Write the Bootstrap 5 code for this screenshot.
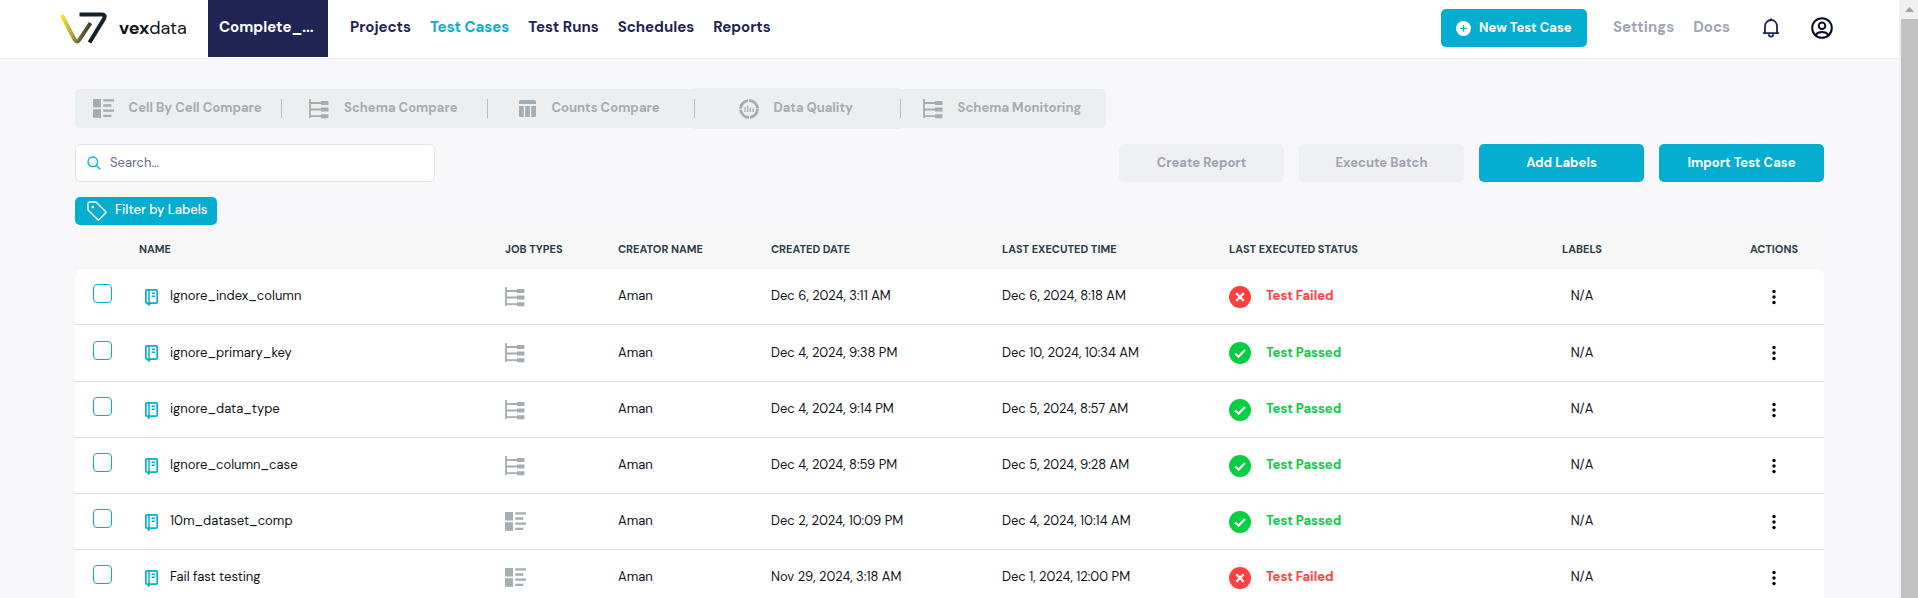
<!DOCTYPE html>
<html lang="en">
<head>
<meta charset="utf-8">
<meta name="viewport" content="width=device-width, initial-scale=1">
<title>vexdata - Test Cases</title>
<link href="https://cdn.jsdelivr.net/npm/bootstrap@5.3.0/dist/css/bootstrap.min.css" rel="stylesheet">
<style>
  :root { --brand: #05add0; --navy: #1f2453; --muted: #a4adb1; }
  body { font-family: "DM Sans", Inter, "Liberation Sans", sans-serif; font-size: 13px; line-height: 20px; color: #101418; background: #f8f8fb; }
  svg { display: block; flex: none; }
  .topbar { height: 59px; border-bottom: 1px solid #ececef; padding: 0 66px 0 60px; }
  .wordmark { width: 148px; font-size: 18px; line-height: 24px; color: #0b1420; text-decoration: none; }
  .project-btn { width: 120px; height: 57px; background: var(--navy); color: #fff; font-size: 15px; font-weight: 700; border: 0; padding: 0 0 4px 11px; text-align: left; }
  .main-links { gap: 19px; margin-left: 22px; padding-bottom: 4px; }
  .main-links a, .side-links a { font-size: 15px; font-weight: 700; color: var(--navy); text-decoration: none; }
  .main-links a.active { color: var(--brand); }
  .side-links a { color: #a0a5b4; padding-bottom: 2px; }
  .side-links { height: 56px; }
  .newcase { width: 146px; }
  .settings { margin-left: 26px; }
  .docs { margin-left: 19px; }
  .bell { margin-left: 32px; }
  .user { margin-left: 31px; }
  .icon-btn { border: 0; background: none; padding: 0; }
  .action-btn { height: 38px; border: 0; border-radius: 5px; background: var(--brand); color: #fff; font-size: 13px; font-weight: 700; padding: 0; white-space: nowrap; }
  .action-btn:disabled { background: #eff0f4; color: #a0a3ae; }
  .wide-btn { width: 165px; }
  .content { padding: 29px 75px 0; }
  .kinds { max-width: 1031px; }
  .kind-btn { flex: 1 1 0; height: 39px; gap: 15px; border: 0; background: #ebefef; color: var(--muted); font-size: 13px; font-weight: 700; padding: 0 2px 0 0; white-space: nowrap; }
  .kind-btn:first-child { border-radius: 5px 0 0 5px; }
  .kind-btn:last-child { border-radius: 0 5px 5px 0; }
  .kind-btn + .kind-btn { background: linear-gradient(#b9bec1, #b9bec1) left center / 1px 19px no-repeat #ebefef; }
  .kind-btn.tall { height: 41px; }
  .tools { margin-top: 15px; }
  .tool-btns { gap: 15px; }
  .search-box { width: 360px; height: 38px; border: 1px solid #e0e5ef; border-radius: 5px; background: #fff; padding-left: 11px; gap: 9px; }
  .search-box input { border: 0; outline: 0; background: none; color: #333; font-size: 13px; padding: 0; }
  .search-box input::placeholder { color: #6c7080; opacity: 1; }
  .filter-btn { height: 28px; width: 142px; border: 0; border-radius: 5px; background: var(--brand); color: #fff; font-size: 13px; font-weight: 500; padding: 0 0 0 12px; gap: 8px; margin-top: 15px; white-space: nowrap; }
  .filter-btn span { padding-bottom: 2px; }
  .cases { table-layout: fixed; width: 100%; margin-top: 4px; border-collapse: separate; border-spacing: 0; }
  .cases th { height: 40px; padding: 0; font-size: 11px; font-weight: 700; color: #2b4049; background: #f8f8f8; white-space: nowrap; }
  .cases td { height: 56px; padding: 0; border-bottom: 1px solid #dfe0e5; background: #fff; white-space: nowrap; }
  .cases tbody tr:first-child td:first-child { border-top-left-radius: 8px; }
  .cases tbody tr:first-child td:last-child { border-top-right-radius: 8px; }
  .cases tbody tr:nth-child(2) td { height: 57px; }
  .cases input { appearance: none; display: block; width: 19px; height: 19px; margin: 0 0 6px 18px; border: 1px solid var(--brand); border-radius: 4px; background: #fff; }
  .cases input:checked { background: var(--brand); }
  .case-name { padding-left: 6px; gap: 11px; }
  .verdict { gap: 15px; font-weight: 700; }
  .cell-text { display: block; padding-bottom: 1px; }
  .failed { color: #ff4040; }
  .passed { color: #05cf40; }
  .c-check { width: 64px; } .c-job { width: 113px; } .c-creator { width: 153px; } .c-created { width: 231px; }
  .c-executed { width: 227px; } .c-status { width: 211px; } .c-labels { width: 284px; } .c-actions { width: 100px; }
  .scroll-rail { width: 19px; background: #f0f0f0; padding-left: 2px; }
  .scroll-thumb { background: #c1c1c1; }
</style>
</head>
<body class="vh-100 overflow-hidden d-flex">

<svg width="0" height="0" class="position-absolute" aria-hidden="true">
  <defs>
    <symbol id="schema" viewBox="0 0 20 20">
      <path d="M1 0v19M1 4h12M1 10.500h12M1 17.200h12" fill="none" stroke="#a4adb1" stroke-width="1.800"/>
      <path d="M12 2h7.500v4H12zM12 8.500h7.500v4H12zM12 15.200h7.500v4H12z" fill="#a4adb1"/>
    </symbol>
    <symbol id="cells" viewBox="0 0 21 19">
      <path d="M0 0h8v8.500H0zM0 10.300h8v8.500H0zM10.300.300H21v2.300H10.300zM10.300 5.300h8v2.400h-8zM10.300 10.400H21v2.400H10.300zM10.300 15.700h8V18h-8z" fill="#a4adb1"/>
    </symbol>
    <symbol id="book" viewBox="0 0 14 18">
      <rect x=".900" y="1.800" width="11.300" height="13.400" rx="1.300" fill="none" stroke="#05add0" stroke-width="1.700"/>
      <path d="M4 1.500v14M6.700 5.200h3.200M6.700 8.300h3.200" fill="none" stroke="#05add0" stroke-width="1.500"/>
      <path d="M2.500 15.500h2.500V17.500H2.500z" fill="#05add0"/>
    </symbol>
    <symbol id="dots" viewBox="0 0 4 16">
      <circle cx="2" cy="2.500" r="1.700"/><circle cx="2" cy="8" r="1.700"/><circle cx="2" cy="13.500" r="1.700"/>
    </symbol>
    <symbol id="pass" viewBox="0 0 22 22">
      <circle cx="11" cy="11" r="11" fill="#05cf40"/>
      <path d="M6.200 11.500l3.300 3.300 6.500-6.800" fill="none" stroke="#fff" stroke-width="2.200"/>
    </symbol>
    <symbol id="fail" viewBox="0 0 22 22">
      <circle cx="11" cy="11" r="11" fill="#ff4040"/>
      <path d="M7.300 7.300l7.400 7.400M14.700 7.300l-7.400 7.400" fill="none" stroke="#fff" stroke-width="2.300"/>
    </symbol>
  </defs>
</svg>

<div class="flex-grow-1 overflow-hidden">
  <header class="topbar bg-white d-flex align-items-start">
    <a href="#" class="wordmark d-flex align-items-center gap-2 mt-2 pt-1" aria-label="vexdata">
      <svg width="47" height="32" viewBox="0 0 47 32">
        <defs>
          <linearGradient id="gold" gradientUnits="userSpaceOnUse" x1="1" y1="4" x2="32" y2="14"><stop offset="0" stop-color="#ffe92e"/><stop offset=".55" stop-color="#a99a35"/><stop offset="1" stop-color="#2c3030"/></linearGradient>
        </defs>
        <path d="M1.800 3L14.500 27.500Q17 31.500 19.500 27.500L30.500 11" fill="none" stroke="url(#gold)" stroke-width="4"/>
        <path d="M19.500 2.500H42q4 0 2 4.200L29.500 30.500" fill="none" stroke="#14202a" stroke-width="4"/>
      </svg>
      <span class="ms-1"><b>vex</b>data</span>
    </a>
    <button class="project-btn" type="button">Complete_...</button>
    <nav class="main-links d-flex align-items-center h-100" aria-label="Main">
      <a href="#">Projects</a><a href="#" class="active">Test Cases</a><a href="#">Test Runs</a><a href="#">Schedules</a><a href="#">Reports</a>
    </nav>
    <div class="ms-auto d-flex align-items-center side-links">
      <button type="button" class="action-btn d-flex align-items-center justify-content-center gap-2 newcase">
        <svg width="15" height="15" viewBox="0 0 16 16"><circle cx="8" cy="8" r="8" fill="#fff"/><path d="M8 4.500v7M4.500 8h7" stroke="#05add0" stroke-width="1.300"/></svg>
        New Test Case
      </button>
      <a href="#" class="settings">Settings</a>
      <a href="#" class="docs">Docs</a>
      <button type="button" class="icon-btn bell" aria-label="Notifications">
        <svg width="18" height="20" viewBox="0 0 18 20" fill="none" stroke="#1f2453" stroke-width="1.800"><path d="M1 15.200h16M3 15V8.500C3 4.700 5.600 2 9 2s6 2.700 6 6.500V15M9 .5V2"/><path d="M6.700 16.200c.2 3.300 4.400 3.300 4.600 0"/></svg>
      </button>
      <button type="button" class="icon-btn user" aria-label="Account">
        <svg width="22" height="22" viewBox="0 0 22 22" fill="none" stroke="#060b20" stroke-width="2"><circle cx="11" cy="11" r="9.800"/><circle cx="11" cy="8.700" r="3.300"/><path d="M4.500 18c2.800-4 10.200-4 13 0"/></svg>
      </button>
    </div>
  </header>

  <main class="content">
    <div class="kinds d-flex align-items-center">
      <button type="button" class="kind-btn d-flex align-items-center justify-content-center"><svg width="21" height="19"><use href="#cells"/></svg><span class="cell-text">Cell By Cell Compare</span></button>
      <button type="button" class="kind-btn d-flex align-items-center justify-content-center"><svg width="20" height="20"><use href="#schema"/></svg><span class="cell-text">Schema Compare</span></button>
      <button type="button" class="kind-btn d-flex align-items-center justify-content-center"><svg width="17" height="17" viewBox="0 0 17 17" fill="#a4adb1"><path d="M1.500 0h14Q17 0 17 1.500V4H0V1.500Q0 0 1.500 0zM0 6h4.700v11H1.500Q0 17 0 15.500zM6.200 6h4.600v11H6.200zM12.300 6H17v9.500q0 1.500-1.500 1.500h-3.200z"/></svg><span class="cell-text">Counts Compare</span></button>
      <button type="button" class="kind-btn tall d-flex align-items-center justify-content-center"><svg width="20" height="20" viewBox="0 0 20 20" fill="none" stroke="#a4adb1"><circle cx="10" cy="10" r="8.500" stroke-width="2.800" stroke-dasharray="12.300 1.050"/><path d="M6 8v5M8.700 6.500V13M11.400 8.500V13M14 9.500V13" stroke-width="1.300"/></svg><span class="cell-text">Data Quality</span></button>
      <button type="button" class="kind-btn d-flex align-items-center justify-content-center"><svg width="20" height="20"><use href="#schema"/></svg><span class="cell-text">Schema Monitoring</span></button>
    </div>

    <div class="tools d-flex align-items-center">
      <label class="search-box d-flex align-items-center">
        <svg width="14" height="14" viewBox="0 0 14 14" fill="none" stroke="#05add0" stroke-width="1.300"><circle cx="5.800" cy="5.800" r="4.800"/><path d="M9.200 9.200l4 4"/></svg>
        <input type="text" class="flex-grow-1" placeholder="Search..." aria-label="Search">
      </label>
      <div class="ms-auto d-flex tool-btns">
        <button type="button" class="action-btn wide-btn" disabled>Create Report</button>
        <button type="button" class="action-btn wide-btn" disabled>Execute Batch</button>
        <button type="button" class="action-btn wide-btn">Add Labels</button>
        <button type="button" class="action-btn wide-btn">Import Test Case</button>
      </div>
    </div>

    <button type="button" class="filter-btn d-flex align-items-center">
      <svg width="20" height="20" viewBox="0 0 20 20" fill="none" stroke="#fff" stroke-width="1.400"><path d="M1 2.500Q1 1 2.500 1H9l9.500 9.500q.8.800 0 1.600l-6.300 6.500q-.8.800-1.600 0L1 9z" stroke-linejoin="round"/><circle cx="5.800" cy="6" r="1" fill="#fff" stroke-width=".8"/></svg>
      <span>Filter by Labels</span>
    </button>

    <table class="cases">
      <colgroup><col class="c-check"><col><col class="c-job"><col class="c-creator"><col class="c-created"><col class="c-executed"><col class="c-status"><col class="c-labels"><col class="c-actions"></colgroup>
      <thead>
        <tr><th></th><th>NAME</th><th>JOB TYPES</th><th>CREATOR NAME</th><th>CREATED DATE</th><th>LAST EXECUTED TIME</th><th>LAST EXECUTED STATUS</th><th class="text-center">LABELS</th><th class="text-center">ACTIONS</th></tr>
      </thead>
      <tbody id="rows"></tbody>
    </table>
  </main>
</div>

<div class="scroll-rail d-flex flex-column flex-shrink-0" aria-hidden="true">
  <svg width="17" height="19" viewBox="0 0 17 19"><path d="M4 12l4.500-5 4.500 5z" fill="#a3a3a3"/></svg>
  <div class="scroll-thumb flex-grow-1"></div>
</div>

<script>
  const cases = [
    ["Ignore_index_column", "schema", "Dec 6, 2024, 3:11 AM", "Dec 6, 2024, 8:18 AM", false],
    ["ignore_primary_key", "schema", "Dec 4, 2024, 9:38 PM", "Dec 10, 2024, 10:34 AM", true],
    ["ignore_data_type", "schema", "Dec 4, 2024, 9:14 PM", "Dec 5, 2024, 8:57 AM", true],
    ["Ignore_column_case", "schema", "Dec 4, 2024, 8:59 PM", "Dec 5, 2024, 9:28 AM", true],
    ["10m_dataset_comp", "cells", "Dec 2, 2024, 10:09 PM", "Dec 4, 2024, 10:14 AM", true],
    ["Fail fast testing", "cells", "Nov 29, 2024, 3:18 AM", "Dec 1, 2024, 12:00 PM", false]
  ];
  const text = value => `<span class="cell-text">${value}</span>`;
  document.getElementById("rows").innerHTML = cases.map(([name, job, created, executed, ok]) => `
    <tr>
      <td><input type="checkbox" aria-label="Select ${name}"></td>
      <td><div class="case-name d-flex align-items-center"><svg width="14" height="18"><use href="#book"/></svg>${text(name)}</div></td>
      <td><svg width="${job === "cells" ? 21 : 20}" height="${job === "cells" ? 19 : 20}"><use href="#${job}"/></svg></td>
      <td>${text("Aman")}</td><td>${text(created)}</td><td>${text(executed)}</td>
      <td><div class="verdict d-flex align-items-center ${ok ? "passed" : "failed"}"><svg width="22" height="22"><use href="#${ok ? "pass" : "fail"}"/></svg>${text(ok ? "Test Passed" : "Test Failed")}</div></td>
      <td class="text-center">${text("N/A")}</td>
      <td><button type="button" class="icon-btn d-block mx-auto" aria-label="Actions for ${name}"><svg width="4" height="16"><use href="#dots"/></svg></button></td>
    </tr>`).join("");
</script>
<script src="https://cdn.jsdelivr.net/npm/bootstrap@5.3.0/dist/js/bootstrap.bundle.min.js"></script>
</body>
</html>
